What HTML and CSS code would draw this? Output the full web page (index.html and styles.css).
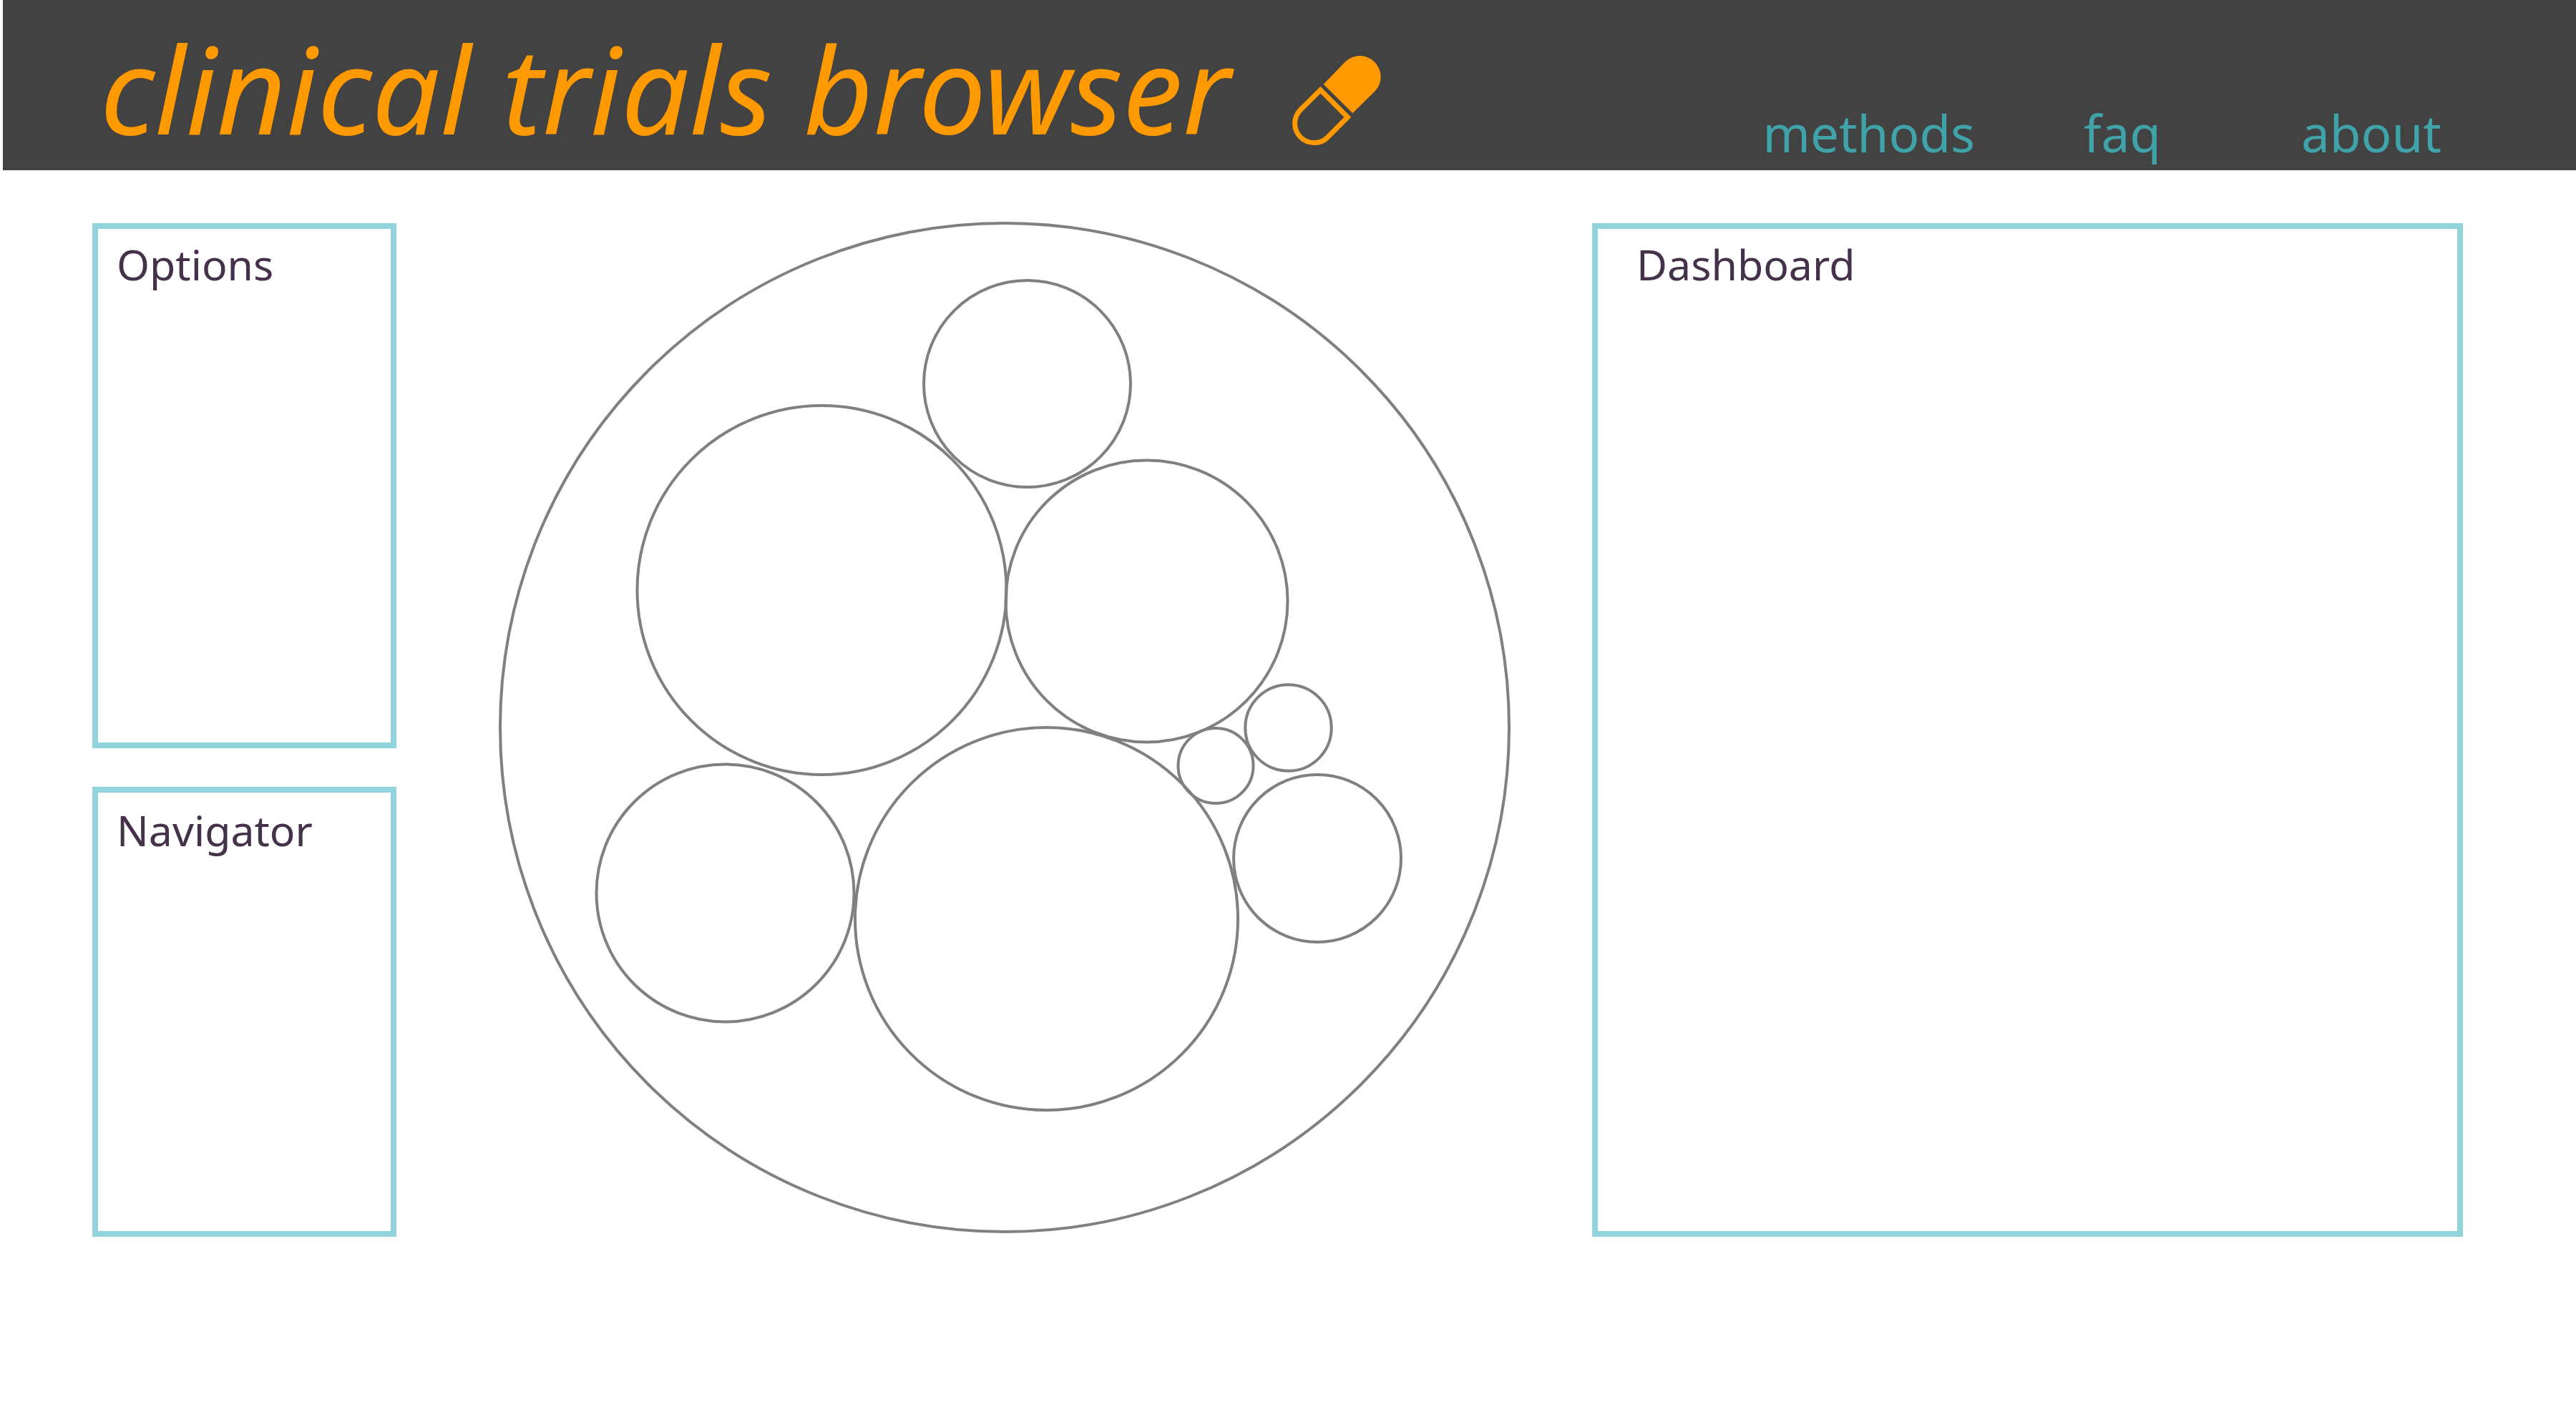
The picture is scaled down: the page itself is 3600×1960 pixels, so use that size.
FILE: index.html
```html
<!DOCTYPE html>
<html lang="en">
<head>
<meta charset="utf-8">
<title>clinical trials browser</title>
<link rel="stylesheet" href="styles.css">
</head>
<body>
<header class="header">
  <h1 class="title">clinical trials browser</h1>
  <svg class="pill" viewBox="78 77 381 384" aria-hidden="true">
    <path fill="currentColor" d="M212 202 L307 104 A88 88 0 0 1 431 228 L334 324 Z"/>
    <path fill="none" stroke="currentColor" stroke-width="21" d="M199 226 L114 311 A81 81 0 0 0 228 426 L313 340 Z"/>
  </svg>
  <nav class="nav">
    <a href="#methods">methods</a>
    <a href="#faq">faq</a>
    <a class="nav-last" href="#about">about</a>
  </nav>
</header>
<main class="main">
  <div class="sidebar">
    <section class="panel"><h2 class="panel-title">Options</h2></section>
    <section class="panel navigator"><h2 class="panel-title">Navigator</h2></section>
  </div>
  <div class="chart">
    <svg class="bubbles" viewBox="698 312 1413 1417" role="img" aria-label="Trials grouped in bubbles">
      <circle cx="1404" cy="1017" r="705"/>
      <circle cx="1435.500" cy="536.500" r="144.500"/>
      <circle cx="1148.500" cy="825" r="258"/>
      <circle cx="1602.500" cy="840.500" r="197"/>
      <circle cx="1013.500" cy="1248.500" r="180"/>
      <circle cx="1462.500" cy="1284.500" r="267.500"/>
      <circle cx="1699" cy="1070.500" r="52.500"/>
      <circle cx="1800.500" cy="1017.500" r="60.200"/>
      <circle cx="1841" cy="1200" r="117"/>
    </svg>
  </div>
  <section class="panel dashboard"><h2 class="panel-title">Dashboard</h2></section>
</main>
</body>
</html>
```

FILE: styles.css
```css
* {
  box-sizing: border-box;
}

body {
  margin: 0;
  background: #fff;
  font-family: "Noto Sans", "Open Sans", sans-serif;
}

.header {
  display: flex;
  align-items: flex-start;
  height: 238px;
  margin-left: 4px;
  padding: 0 188px 0 136px;
  background: #424242;
}

.title {
  margin: 0;
  padding-top: 9px;
  color: #ff9900;
  font-size: 168px;
  font-style: italic;
  font-weight: 400;
  line-height: 228px;
  white-space: nowrap;
}

.pill {
  flex: none;
  width: 127px;
  height: 128px;
  margin: 76px 0 0 85px;
  color: #ff9900;
}

.nav {
  display: flex;
  gap: 152px;
  margin-left: auto;
  padding-top: 136px;
  font-size: 71px;
  line-height: 100px;
}

.nav a {
  color: #3fa3a9;
  text-decoration: none;
}

.nav-last {
  margin-left: 44px;
}

.main {
  display: grid;
  grid-template-columns: 425fr 1671fr 1217fr;
  padding: 74px 158px 80px 129px;
}

.sidebar {
  display: grid;
  grid-template-rows: 734fr 629fr;
  gap: 54px;
}

.panel {
  padding: 7px 26px;
  border: 8px solid #92d4dc;
}

.navigator {
  padding-top: 10px;
}

.dashboard {
  padding: 7px 54px;
}

.panel-title {
  margin: 0;
  color: #45324a;
  font-size: 59px;
  font-weight: 400;
  line-height: 84px;
}

.chart {
  padding: 0 114px 0 144px;
}

.bubbles {
  display: block;
  width: 100%;
  overflow: visible;
  fill: none;
  stroke: #808080;
  stroke-width: 4;
}
```
